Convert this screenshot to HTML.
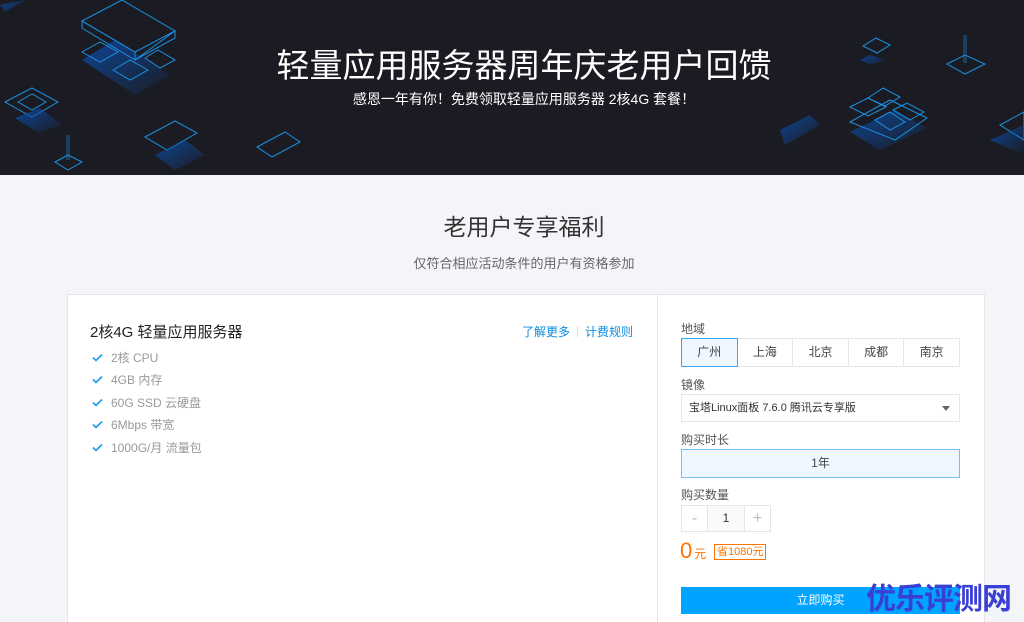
<!DOCTYPE html>
<html><head><meta charset="utf-8"><style>
*{margin:0;padding:0;box-sizing:border-box}
html,body{width:1024px;height:622px;overflow:hidden}
body{background:#f4f5f8;font-family:"Liberation Sans","Noto Sans CJK SC",sans-serif;position:relative}
.banner{position:absolute;left:0;top:0;width:1024px;height:175px;background:#1b1c23;overflow:hidden}
.t1{position:absolute;top:39px;left:24px;width:1000px;text-align:center;color:#fff;font-size:33px}
.t2{position:absolute;top:89px;left:24px;width:1000px;text-align:center;color:#fff;font-size:14px}
.h{position:absolute;top:208px;left:24px;width:1000px;text-align:center;font-size:23px;color:#333}
.s{position:absolute;top:253px;left:24px;width:1000px;text-align:center;font-size:13px;color:#666}
.card{position:absolute;left:67px;top:294px;width:918px;height:340px;background:#fff;border:1px solid #e5e5e5}
.left{position:absolute;left:0;top:0;width:589px;height:100%}
.right{position:absolute;left:589px;top:0;width:328px;height:100%;border-left:1px solid #e5e5e5}
.title{position:absolute;left:22px;top:26px;font-size:15px;color:#222}
.links{position:absolute;right:24px;top:28px;font-size:12px;color:#0a8ce0}
.links i{display:inline-block;width:1px;height:11px;background:#ddd;margin:0 7px;vertical-align:-1px}
ul{position:absolute;left:24px;top:51px;list-style:none}
li{height:22.5px;font-size:12px;color:#999;display:flex;align-items:center}
li svg{margin-right:8px}
.lb{position:absolute;left:23px;font-size:12px;color:#555}
.reg{position:absolute;left:23px;top:43px;display:flex}
.reg div{width:56.6px;height:29px;border:1px solid #e5e5e5;margin-right:-1px;font-size:12px;color:#444;text-align:center;line-height:27px}
.reg div.on{background:#eef7ff;border-color:#3ba3f0;position:relative;z-index:1}
.sel{position:absolute;left:23px;top:99px;width:279px;height:28px;border:1px solid #e5e5e5;font-size:11px;color:#333;line-height:26px;padding-left:7px}
.sel:after{content:"";position:absolute;right:9px;top:11px;border:4px solid transparent;border-top:5px solid #666}
.yr{position:absolute;left:23px;top:154px;width:279px;height:29px;border:1px solid #76bff2;background:#eef7ff;font-size:12px;color:#444;text-align:center;line-height:27px}
.num{position:absolute;left:23px;top:210px;display:flex}
.num div{width:27px;height:27px;border:1px solid #e5e5e5;margin-right:-1px;text-align:center;line-height:25px;color:#bbb;font-size:16px}
.num div.m{width:38px;background:#fafafa;color:#333;font-size:12px}
.price{position:absolute;left:22px;top:243px;color:#ff7200;font-size:22px}
.price small{font-size:12px;margin-left:2px}
.save{position:absolute;left:56px;top:249px;border:1px solid #ff7200;color:#ff7200;font-size:11px;padding:0 2px;line-height:14px}
.buy{position:absolute;left:23px;top:292px;width:279px;height:27px;background:#00a3ff;color:#fff;font-size:12px;text-align:center;line-height:27px}
.wm{position:absolute;left:866px;top:574px;font-size:30px;font-weight:bold;color:#3a3fd6;letter-spacing:-1px}
</style></head><body>
<div class="banner">
<svg width="1024" height="175" style="position:absolute;left:0;top:0" fill="none" stroke="#1a8fe0" stroke-width="1">
<defs><linearGradient id="g" x1="0" y1="0" x2="1" y2="1"><stop offset="0" stop-color="#0b4fb0" stop-opacity=".8"/><stop offset="1" stop-color="#0b4fb0" stop-opacity="0"/></linearGradient></defs>
<polygon points="82,60 135,95 170,75 115,40" fill="url(#g)" stroke="none"/>
<polygon points="82,21 122,0 175,31 135,52" />
<polygon points="82,21 82,28 135,60 135,52"/>
<polygon points="135,60 175,38 175,31"/>
<polygon points="82,52 100,42 118,52 100,62"/>
<polygon points="113,70 130,60 148,70 130,80"/>
<polygon points="145,58 158,50 175,60 160,68"/>
<polygon points="5,102 32,88 58,102 32,117"/>
<polygon points="18,102 32,94 46,102 32,110"/>
<polygon points="15,118 40,108 62,125 38,133" fill="url(#g)" stroke="none"/>
<polygon points="145,137 175,121 197,133 167,150"/>
<polygon points="155,155 185,140 205,155 175,170" fill="url(#g)" stroke="none"/>
<polygon points="257,147 285,132 300,142 272,157"/>
<polygon points="55,162 68,155 82,162 68,170"/>
<rect x="66" y="135" width="4" height="25" fill="#1a8fe0" opacity=".3" stroke="none"/>
<polygon points="863,46 876,38 890,45 877,53"/>
<polygon points="860,60 870,55 885,60 872,65" fill="url(#g)" stroke="none"/>
<polygon points="947,64 965,55 985,64 965,74"/>
<rect x="963" y="35" width="4" height="28" fill="#1a8fe0" opacity=".3" stroke="none"/>
<polygon points="850,132 895,110 927,128 880,150" fill="url(#g)" stroke="none"/>
<polygon points="850,122 890,100 927,118 895,140"/>
<polygon points="850,107 868,98 886,107 868,116"/>
<polygon points="868,98 883,88 900,97 885,106"/>
<polygon points="893,110 907,103 924,112 910,120"/>
<polygon points="875,120 890,112 905,122 890,130"/>
<polygon points="1000,125 1024,112 1024,140" />
<polygon points="990,140 1024,125 1024,155" fill="url(#g)" stroke="none"/>
<polygon points="780,130 810,115 820,125 785,145" fill="url(#g)" stroke="none"/>
<polygon points="0,5 25,0 5,12" fill="url(#g)" stroke="none"/>
</svg>
<div class="t1">轻量应用服务器周年庆老用户回馈</div>
<div class="t2">感恩一年有你！免费领取轻量应用服务器 2核4G 套餐！</div>
</div>
<div class="h">老用户专享福利</div>
<div class="s">仅符合相应活动条件的用户有资格参加</div>
<div class="card">
<div class="left">
<div class="title">2核4G 轻量应用服务器</div>
<div class="links">了解更多<i></i>计费规则</div>
<ul>
<li><svg width="11" height="9"><path d="M1 4.5L4 7.5L10 1.5" stroke="#1a9cf0" stroke-width="1.6" fill="none"/></svg>2核 CPU</li>
<li><svg width="11" height="9"><path d="M1 4.5L4 7.5L10 1.5" stroke="#1a9cf0" stroke-width="1.6" fill="none"/></svg>4GB 内存</li>
<li><svg width="11" height="9"><path d="M1 4.5L4 7.5L10 1.5" stroke="#1a9cf0" stroke-width="1.6" fill="none"/></svg>60G SSD 云硬盘</li>
<li><svg width="11" height="9"><path d="M1 4.5L4 7.5L10 1.5" stroke="#1a9cf0" stroke-width="1.6" fill="none"/></svg>6Mbps 带宽</li>
<li><svg width="11" height="9"><path d="M1 4.5L4 7.5L10 1.5" stroke="#1a9cf0" stroke-width="1.6" fill="none"/></svg>1000G/月 流量包</li>
</ul>
</div>
<div class="right">
<div class="lb" style="top:25px">地域</div>
<div class="reg"><div class="on">广州</div><div>上海</div><div>北京</div><div>成都</div><div>南京</div></div>
<div class="lb" style="top:81px">镜像</div>
<div class="sel">宝塔Linux面板 7.6.0 腾讯云专享版</div>
<div class="lb" style="top:136px">购买时长</div>
<div class="yr">1年</div>
<div class="lb" style="top:191px">购买数量</div>
<div class="num"><div>-</div><div class="m">1</div><div>+</div></div>
<div class="price">0<small>元</small></div>
<div class="save">省1080元</div>
<div class="buy">立即购买</div>
</div>
</div>
<div class="wm">优乐评测网</div>
</body></html>
